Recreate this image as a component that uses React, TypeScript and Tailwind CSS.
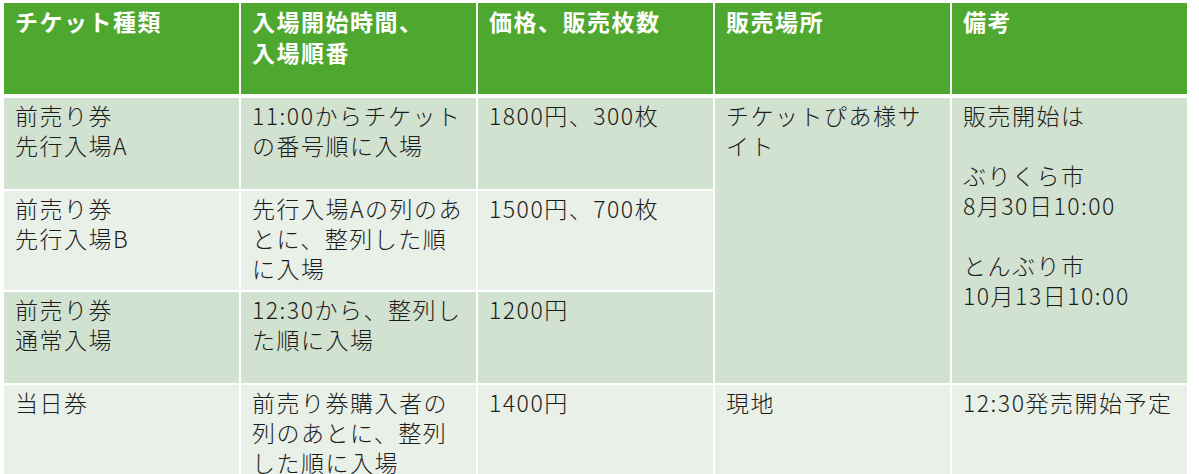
const font = { fontFamily: '"Noto Sans CJK JP", "Noto Sans", sans-serif' };

const headers = [["チケット種類"], ["入場開始時間、", "入場順番"], ["価格、販売枚数"], ["販売場所"], ["備考"]];

const Lines = ({ lines }: { lines: string[] }) => (
  <>
    {lines.map((l, i) => (
      <div key={i} className="whitespace-nowrap">
        {l || "\u00a0"}
      </div>
    ))}
  </>
);

const dark = "bg-[#d2e2d0]";
const light = "bg-[#e9f0e8]";
const cell = "pl-[11px] pt-[2px] text-[23px] font-light leading-[30px] tracking-[1.5px] text-[#1c1c1c]";

export default function App() {
  return (
    <div className="min-h-screen bg-white pl-[4px] pt-[3px]" style={font}>
      <div className="grid grid-cols-[repeat(5,235px)] gap-x-[2px]">
        {headers.map((h, i) => (
          <div key={i} className="h-[91px] bg-[#4ea72e] pl-[11px] pt-[3px] text-[23px] font-bold leading-[31px] tracking-[1.5px] text-white">
            <Lines lines={h} />
          </div>
        ))}
      </div>
      <div className="mt-[4px] grid grid-cols-[repeat(5,235px)] grid-rows-[91px_99px_91px_120px] gap-x-[2px] gap-y-[2px]">
        <div className={`${dark} ${cell}`}>
          <Lines lines={["前売り券", "先行入場A"]} />
        </div>
        <div className={`${dark} ${cell}`}>
          <Lines lines={["11:00からチケット", "の番号順に入場"]} />
        </div>
        <div className={`${dark} ${cell}`}>
          <Lines lines={["1800円、300枚"]} />
        </div>
        <div className={`${dark} ${cell} row-span-3`}>
          <Lines lines={["チケットぴあ様サ", "イト"]} />
        </div>
        <div className={`${dark} ${cell} row-span-3 leading-[30.5px]`}>
          <Lines lines={["販売開始は", "", "ぶりくら市", "8月30日10:00", "", "とんぶり市", "10月13日10:00"]} />
        </div>

        <div className={`${light} ${cell}`}>
          <Lines lines={["前売り券", "先行入場B"]} />
        </div>
        <div className={`${light} ${cell}`}>
          <Lines lines={["先行入場Aの列のあ", "とに、整列した順", "に入場"]} />
        </div>
        <div className={`${light} ${cell}`}>
          <Lines lines={["1500円、700枚"]} />
        </div>

        <div className={`${dark} ${cell}`}>
          <Lines lines={["前売り券", "通常入場"]} />
        </div>
        <div className={`${dark} ${cell}`}>
          <Lines lines={["12:30から、整列し", "た順に入場"]} />
        </div>
        <div className={`${dark} ${cell}`}>
          <Lines lines={["1200円"]} />
        </div>

        <div className={`${light} ${cell}`}>
          <Lines lines={["当日券"]} />
        </div>
        <div className={`${light} ${cell}`}>
          <Lines lines={["前売り券購入者の", "列のあとに、整列", "した順に入場"]} />
        </div>
        <div className={`${light} ${cell}`}>
          <Lines lines={["1400円"]} />
        </div>
        <div className={`${light} ${cell}`}>
          <Lines lines={["現地"]} />
        </div>
        <div className={`${light} ${cell}`}>
          <Lines lines={["12:30発売開始予定"]} />
        </div>
      </div>
    </div>
  );
}
